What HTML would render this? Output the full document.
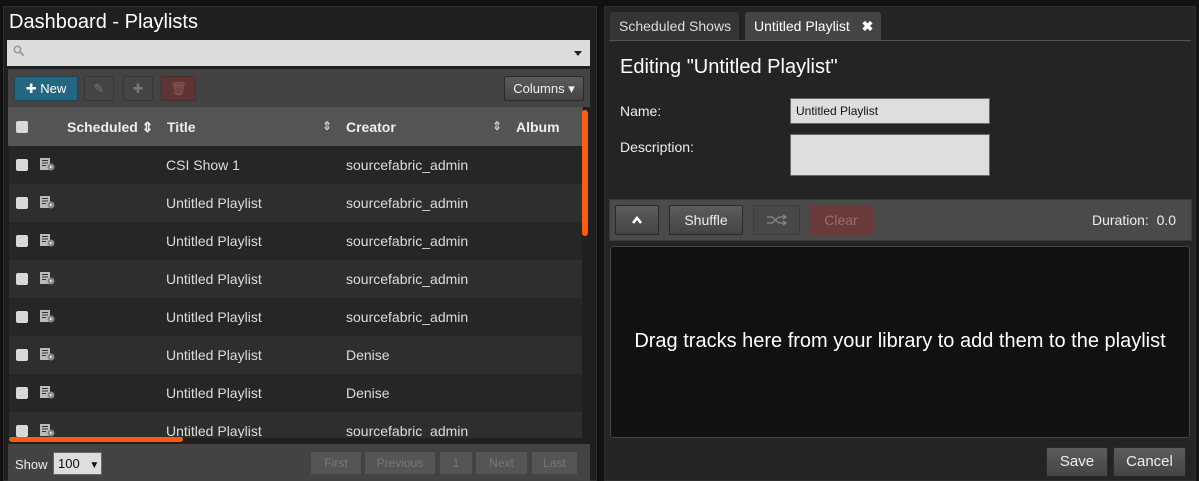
<!DOCTYPE html>
<html><head><meta charset="utf-8"><style>
*{box-sizing:border-box;margin:0;padding:0}
body{width:1199px;height:481px;background:#111;font-family:"Liberation Sans",sans-serif;color:#eee;position:relative;overflow:hidden;font-size:14px}
.abs{position:absolute}
.btn{position:absolute;border:1px solid #2a2a2a;background:linear-gradient(#5c5c5c,#444);color:#eee;font-size:13px;text-align:center;border-radius:2px}
.cb{position:absolute;left:16px;width:12px;height:12px;background:#d8d8d8;border-radius:2px}
.ic{position:absolute;left:40px;width:16px;height:13px}
.row{position:absolute;left:9px;width:573px;height:38px;font-size:14px;color:#ddd}
.row span{position:absolute;top:11px}
.pg{position:absolute;top:452px;height:22px;background:#555;color:#777;font-size:12px;line-height:22px;text-align:center}
</style></head><body>
<svg width="0" height="0" style="position:absolute"><defs><symbol id="d" viewBox="0 0 16 13"><rect x="0" y="0" width="10" height="12" fill="#bbb"/><rect x="2" y="2" width="6" height="1" fill="#333"/><rect x="2" y="4.5" width="6" height="1" fill="#333"/><rect x="2" y="7" width="4" height="1" fill="#333"/><circle cx="11" cy="9" r="3.5" fill="#888"/><path d="M10 7.5 L12.5 9 L10 10.5Z" fill="#eee"/></symbol></defs></svg>
<!-- left panel -->
<div class="abs" style="left:3px;top:6px;width:594px;height:475px;background:#1f1f1f;border:1px solid #2e2e2e"></div>
<div class="abs" style="left:9px;top:11px;font-size:20px;color:#fff">Dashboard - Playlists</div>
<div class="abs" style="left:7px;top:40px;width:583px;height:26px;background:#dcdcdc"></div>
<svg class="abs" style="left:13px;top:45px" width="12" height="12"><circle cx="4.5" cy="4.5" r="3.2" fill="none" stroke="#999" stroke-width="1.6"/><line x1="7" y1="7" x2="10.5" y2="10.5" stroke="#999" stroke-width="2"/></svg>
<div class="abs" style="left:574px;top:51px;border:4px solid transparent;border-top:5px solid #222"></div>
<div class="abs" style="left:8px;top:69px;width:582px;height:38px;background:#434343"></div>
<div class="btn" style="left:14px;top:76px;width:64px;height:25px;background:#22677f;border-color:#15485a;line-height:23px;color:#fff">✚ New</div>
<div class="btn" style="left:84px;top:76px;width:30px;height:25px;background:#444;border-color:#383838;color:#777;line-height:23px">✎</div>
<div class="btn" style="left:123px;top:76px;width:30px;height:25px;background:#444;border-color:#383838;color:#777;line-height:23px">✚</div>
<div class="btn" style="left:161px;top:76px;width:35px;height:25px;background:#5e3535;border-color:#4e2e2e;color:#8a5a5a;line-height:23px">🗑</div>
<div class="btn" style="left:504px;top:76px;width:80px;height:25px;line-height:23px">Columns ▾</div>
<div class="abs" style="left:8px;top:107px;width:575px;height:39px;background:#545454"></div>
<div class="cb" style="top:121px"></div>
<div class="abs" style="left:67px;top:119px;font-weight:bold;font-size:14px">Scheduled ⇕</div>
<div class="abs" style="left:167px;top:119px;font-weight:bold;font-size:14px">Title</div>
<div class="abs" style="left:322px;top:119px;font-size:12px">⇕</div>
<div class="abs" style="left:346px;top:119px;font-weight:bold;font-size:14px">Creator</div>
<div class="abs" style="left:492px;top:119px;font-size:12px">⇕</div>
<div class="abs" style="left:516px;top:119px;font-weight:bold;font-size:14px">Album</div>
<div class="abs" style="left:582px;top:110px;width:6px;height:126px;background:#ff5a14;border-radius:3px"></div>
<div class="row" style="top:146px;background:#262626"><span style="left:157px">CSI Show 1</span><span style="left:337px">sourcefabric_admin</span></div>
<div class="row" style="top:184px;background:#2e2e2e"><span style="left:157px">Untitled Playlist</span><span style="left:337px">sourcefabric_admin</span></div>
<div class="row" style="top:222px;background:#262626"><span style="left:157px">Untitled Playlist</span><span style="left:337px">sourcefabric_admin</span></div>
<div class="row" style="top:260px;background:#2e2e2e"><span style="left:157px">Untitled Playlist</span><span style="left:337px">sourcefabric_admin</span></div>
<div class="row" style="top:298px;background:#262626"><span style="left:157px">Untitled Playlist</span><span style="left:337px">sourcefabric_admin</span></div>
<div class="row" style="top:336px;background:#2e2e2e"><span style="left:157px">Untitled Playlist</span><span style="left:337px">Denise</span></div>
<div class="row" style="top:374px;background:#262626"><span style="left:157px">Untitled Playlist</span><span style="left:337px">Denise</span></div>
<div class="row" style="top:412px;height:26px;background:#2e2e2e;overflow:hidden"><span style="left:157px">Untitled Playlist</span><span style="left:337px">sourcefabric_admin</span></div>
<div class="cb" style="top:159px"></div><div class="cb" style="top:197px"></div><div class="cb" style="top:235px"></div><div class="cb" style="top:273px"></div><div class="cb" style="top:311px"></div><div class="cb" style="top:349px"></div><div class="cb" style="top:387px"></div><div class="cb" style="top:425px"></div>
<svg class="ic" style="top:158px"><use href="#d"/></svg><svg class="ic" style="top:196px"><use href="#d"/></svg><svg class="ic" style="top:234px"><use href="#d"/></svg><svg class="ic" style="top:272px"><use href="#d"/></svg><svg class="ic" style="top:310px"><use href="#d"/></svg><svg class="ic" style="top:348px"><use href="#d"/></svg><svg class="ic" style="top:386px"><use href="#d"/></svg><svg class="ic" style="top:424px"><use href="#d"/></svg>
<div class="abs" style="left:9px;top:437px;width:174px;height:5px;background:#ff5a14;border-radius:3px"></div>
<div class="abs" style="left:8px;top:444px;width:582px;height:37px;background:#434343"></div>
<div class="abs" style="left:15px;top:457px;font-size:13px">Show</div>
<div class="abs" style="left:53px;top:452px;width:49px;height:23px;background:#ddd;border:1px solid #666;color:#111;font-size:13px;line-height:21px;padding-left:4px">100 <span style="font-size:10px;margin-left:6px">▼</span></div>
<div class="pg" style="left:311px;width:50px">First</div>
<div class="pg" style="left:365px;width:70px">Previous</div>
<div class="pg" style="left:440px;width:32px">1</div>
<div class="pg" style="left:476px;width:51px">Next</div>
<div class="pg" style="left:532px;width:45px">Last</div>
<!-- right panel -->
<div class="abs" style="left:604px;top:6px;width:592px;height:475px;background:#242424;border:1px solid #2e2e2e"></div>
<div class="abs" style="left:610px;top:12px;width:129px;height:29px;background:#353535;border-radius:3px 3px 0 0;font-size:14px;line-height:29px;padding-left:9px;color:#ddd">Scheduled Shows</div>
<div class="abs" style="left:745px;top:12px;width:136px;height:29px;background:#444;border-radius:3px 3px 0 0;font-size:14px;line-height:29px;padding-left:9px;color:#fff">Untitled Playlist <b style="margin-left:8px">✖</b></div>
<div class="abs" style="left:609px;top:40px;width:582px;height:1px;background:#555"></div>
<div class="abs" style="left:620px;top:56px;font-size:20px;color:#fff">Editing "Untitled Playlist"</div>
<div class="abs" style="left:620px;top:103px;font-size:14px">Name:</div>
<div class="abs" style="left:790px;top:98px;width:200px;height:26px;background:#ddd;border:1px solid #666;color:#111;font-size:12px;line-height:24px;padding-left:5px">Untitled Playlist</div>
<div class="abs" style="left:620px;top:139px;font-size:14px">Description:</div>
<div class="abs" style="left:790px;top:134px;width:200px;height:42px;background:#ddd;border:1px solid #666"></div>
<div class="abs" style="left:609px;top:199px;width:583px;height:42px;background:#4a4a4a;border:1px solid #3a3a3a"></div>
<div class="btn" style="left:615px;top:205px;width:44px;height:30px"><svg width="12" height="10" style="margin-top:9px"><path d="M2 8 L6 3 L10 8" fill="none" stroke="#fff" stroke-width="2.6"/></svg></div>
<div class="btn" style="left:669px;top:205px;width:74px;height:30px;line-height:28px;font-size:14px">Shuffle</div>
<div class="btn" style="left:753px;top:205px;width:47px;height:30px;background:#484848;border-color:#3c3c3c"><svg width="22" height="12" style="margin-top:8px"><path d="M1 3 H6 L13 9 H20 M1 9 H6 L13 3 H20 M17 1 L20 3 L17 5 M17 7 L20 9 L17 11" fill="none" stroke="#888" stroke-width="1.2"/></svg></div>
<div class="btn" style="left:809px;top:205px;width:64px;height:30px;line-height:28px;font-size:14px;background:#6a3a3a;border-color:#6a3a3a;color:#9a6c6c">Clear</div>
<div class="abs" style="left:1092px;top:212px;font-size:14px">Duration:&nbsp; 0.0</div>
<div class="abs" style="left:610px;top:246px;width:580px;height:192px;background:#111;border:1px solid #444;border-radius:3px"></div>
<div class="abs" style="left:610px;top:330px;width:580px;text-align:center;font-size:20px;color:#fff">Drag tracks here from your library to add them to the playlist</div>
<div class="btn" style="left:1046px;top:447px;width:62px;height:30px;line-height:28px;font-size:15px">Save</div>
<div class="btn" style="left:1113px;top:447px;width:73px;height:30px;line-height:28px;font-size:15px">Cancel</div>
</body></html>
